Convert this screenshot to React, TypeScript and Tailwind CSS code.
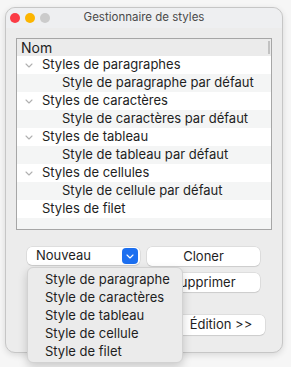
import React from 'react'

const rows: { label: string; child?: boolean; chevron?: boolean }[] = [
  { label: 'Styles de paragraphes', chevron: true },
  { label: 'Style de paragraphe par défaut', child: true },
  { label: 'Styles de caractères', chevron: true },
  { label: 'Style de caractères par défaut', child: true },
  { label: 'Styles de tableau', chevron: true },
  { label: 'Style de tableau par défaut', child: true },
  { label: 'Styles de cellules', chevron: true },
  { label: 'Style de cellule par défaut', child: true },
  { label: 'Styles de filet' },
]

const menuItems = [
  'Style de paragraphe',
  'Style de caractères',
  'Style de tableau',
  'Style de cellule',
  'Style de filet',
]

function Chevron({ className }: { className?: string }) {
  return (
    <svg width="8" height="5" viewBox="0 0 8 5" className={className}>
      <path d="M1 1l3 3 3-3" fill="none" stroke="currentColor" strokeWidth="1.1" strokeLinecap="round" strokeLinejoin="round" />
    </svg>
  )
}

export default function App() {
  return (
    <div className="relative w-[291px] h-[367px] overflow-hidden bg-[#f6f6f6] text-[13px] text-[#1e1e1e] font-['Inter',sans-serif]">
      {/* window */}
      <div className="ml-[5px] mt-[7px] w-[278px] h-[346px] rounded-[10px] border border-[#c6c6c6] bg-[#ececec] shadow-[0_2px_6px_rgba(0,0,0,0.12)]">
        {/* title bar */}
        <div className="relative flex items-center h-[20px] pl-[4px] rounded-t-[10px] bg-[#eeeff1]">
          <div className="flex gap-[5px]">
            <span className="w-[10px] h-[10px] rounded-full bg-[#fb3b45]" />
            <span className="w-[10px] h-[10px] rounded-full bg-[#fcb500]" />
            <span className="w-[10px] h-[10px] rounded-full bg-[#cbcbcb]" />
          </div>
          <div className="absolute inset-0 flex items-center justify-center text-[11.5px] text-[#4a4a4a]">
            Gestionnaire de styles
          </div>
        </div>

        <div className="pl-[10px] pt-[10px]">
          {/* table */}
          <div className="w-[256px] h-[192px] border border-[#a6a6a6] bg-white overflow-hidden">
            <div className="flex items-center justify-between h-[17px] bg-[#ebebeb] pl-[4px]">
              <span className="text-[14px] leading-none">Nom</span>
              <span className="w-[2px] h-[13px] bg-[#c2c2c2] mr-[1px]" />
            </div>
            {rows.map((r, i) => (
              <div
                key={r.label}
                className={`flex items-center h-[18px] ${i % 2 === 0 ? 'bg-white' : 'bg-[#f4f5f5]'}`}
              >
                <span className="w-[25px] flex justify-end pr-[9px] text-[#b0b0b0]">
                  {r.chevron && <Chevron />}
                </span>
                <span className={r.child ? 'pl-[20px]' : ''}>{r.label}</span>
              </div>
            ))}
            <div className="h-[18px] bg-[#f4f5f5]" />
          </div>

          {/* buttons */}
          <div className="flex gap-[7px] mt-[17px] pl-[11px]">
            <div className="flex items-center justify-between w-[113px] h-[18px] rounded-[5px] bg-white shadow-[0_0_0_0.5px_rgba(0,0,0,0.12),0_1px_1px_rgba(0,0,0,0.08)] pl-[9px] pr-[2px]">
              <span>Nouveau</span>
              <span className="flex items-center justify-center w-[16px] h-[16px] rounded-[4px] bg-[#1c6ff0] text-white">
                <Chevron />
              </span>
            </div>
            <div className="flex items-center justify-center w-[113px] h-[19px] rounded-[5px] bg-white shadow-[0_0_0_0.5px_rgba(0,0,0,0.12),0_1px_1px_rgba(0,0,0,0.08)]">
              Cloner
            </div>
          </div>
          <div className="flex mt-[7px] pl-[131px]">
            <div className="flex items-center justify-center w-[113px] h-[19px] rounded-[5px] bg-white shadow-[0_0_0_0.5px_rgba(0,0,0,0.12),0_1px_1px_rgba(0,0,0,0.08)]">
              Supprimer
            </div>
          </div>
          <div className="flex mt-[23px] pl-[149px]">
            <div className="flex items-center justify-center w-[100px] h-[20px] rounded-[5px] bg-white shadow-[0_0_0_0.5px_rgba(0,0,0,0.12),0_1px_1px_rgba(0,0,0,0.08)] pl-[12px]">
              Édition &gt;&gt;
            </div>
          </div>
        </div>
      </div>

      {/* popup menu */}
      <div className="absolute left-[27px] top-[267px] w-[156px] h-[96px] rounded-[6px] border border-[#d2d2d2] bg-[#ebebeb] shadow-[0_4px_10px_rgba(0,0,0,0.18)] pt-[3px]">
        {menuItems.map((m) => (
          <div key={m} className="flex items-center h-[18px] pl-[17px]">
            {m}
          </div>
        ))}
      </div>
    </div>
  )
}
